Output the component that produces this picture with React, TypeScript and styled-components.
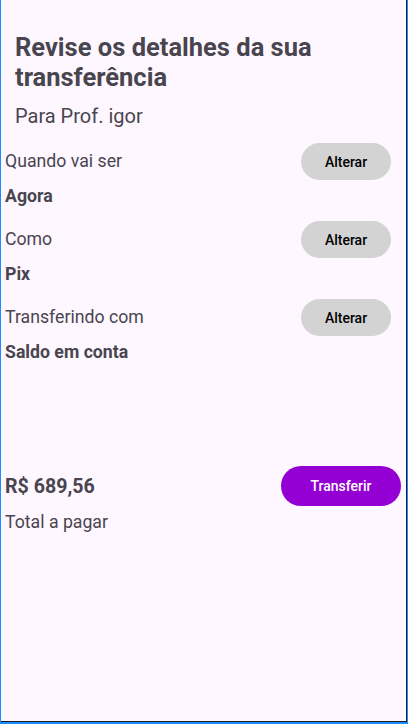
import React from "react";
import styled, { createGlobalStyle } from "styled-components";

const Global = createGlobalStyle`
  html, body { margin: 0; padding: 0; background: #fef7ff; }
  * { box-sizing: border-box; }
`;

const Frame = styled.div`
  width: 408px;
  height: 724px;
  border-left: 1px solid #1a8cff;
  border-right: 1px solid #1a8cff;
  border-bottom: 2px solid #1a8cff;
  background: #fef7ff;
`;

const Screen = styled.div`
  height: 100%;
  border-right: 1px solid #1c1b1f;
  border-bottom: 1px solid #1c1b1f;
  display: flex;
  flex-direction: column;
  font-family: Roboto, "Noto Sans", sans-serif;
  color: #49454f;
`;

const Header = styled.div`
  padding: 32px 14px 0 14px;
  display: flex;
  flex-direction: column;
  gap: 13px;
`;

const Title = styled.h1`
  margin: 0;
  font-size: 25.5px;
  line-height: 30px;
  font-weight: 700;
`;

const Subtitle = styled.div`
  font-size: 20px;
  line-height: 23px;
`;

const Sections = styled.div`
  margin-top: 15px;
  display: flex;
  flex-direction: column;
  gap: 14px;
`;

const Section = styled.div`
  display: flex;
  flex-direction: column;
  gap: 6px;
  padding: 0 15px 0 4px;
`;

const Row = styled.div`
  display: flex;
  align-items: center;
  justify-content: space-between;
  height: 37px;
`;

const Label = styled.span`
  font-size: 17.7px;
  line-height: 21px;
`;

const Value = styled.span`
  font-size: 17.7px;
  line-height: 21px;
  font-weight: 700;
`;

const PillButton = styled.button<{ $primary?: boolean }>`
  border: none;
  border-radius: 999px;
  font-family: Roboto, sans-serif;
  font-size: 14px;
  font-weight: 500;
  cursor: pointer;
  width: ${(p) => (p.$primary ? "120px" : "90px")};
  height: ${(p) => (p.$primary ? "40px" : "37px")};
  background: ${(p) => (p.$primary ? "#9400d3" : "#d3d3d3")};
  color: ${(p) => (p.$primary ? "#ffffff" : "#000000")};
`;

const Footer = styled.div`
  margin-top: 103px;
  padding: 0 5px 0 4px;
  display: flex;
  flex-direction: column;
  gap: 6px;
`;

const TotalRow = styled.div`
  display: flex;
  align-items: center;
  justify-content: space-between;
  height: 40px;
`;

const Price = styled.span`
  font-size: 19.6px;
  line-height: 23px;
  font-weight: 700;
`;

const items = [
  { label: "Quando vai ser", value: "Agora" },
  { label: "Como", value: "Pix" },
  { label: "Transferindo com", value: "Saldo em conta" },
];

export default function App() {
  return (
    <>
      <Global />
      <Frame>
        <Screen>
          <Header>
            <Title>Revise os detalhes da sua transferência</Title>
            <Subtitle>Para Prof. igor</Subtitle>
          </Header>
          <Sections>
            {items.map((it) => (
              <Section key={it.label}>
                <Row>
                  <Label>{it.label}</Label>
                  <PillButton>Alterar</PillButton>
                </Row>
                <Value>{it.value}</Value>
              </Section>
            ))}
          </Sections>
          <Footer>
            <TotalRow>
              <Price>R$ 689,56</Price>
              <PillButton $primary>Transferir</PillButton>
            </TotalRow>
            <Label>Total a pagar</Label>
          </Footer>
        </Screen>
      </Frame>
    </>
  );
}
